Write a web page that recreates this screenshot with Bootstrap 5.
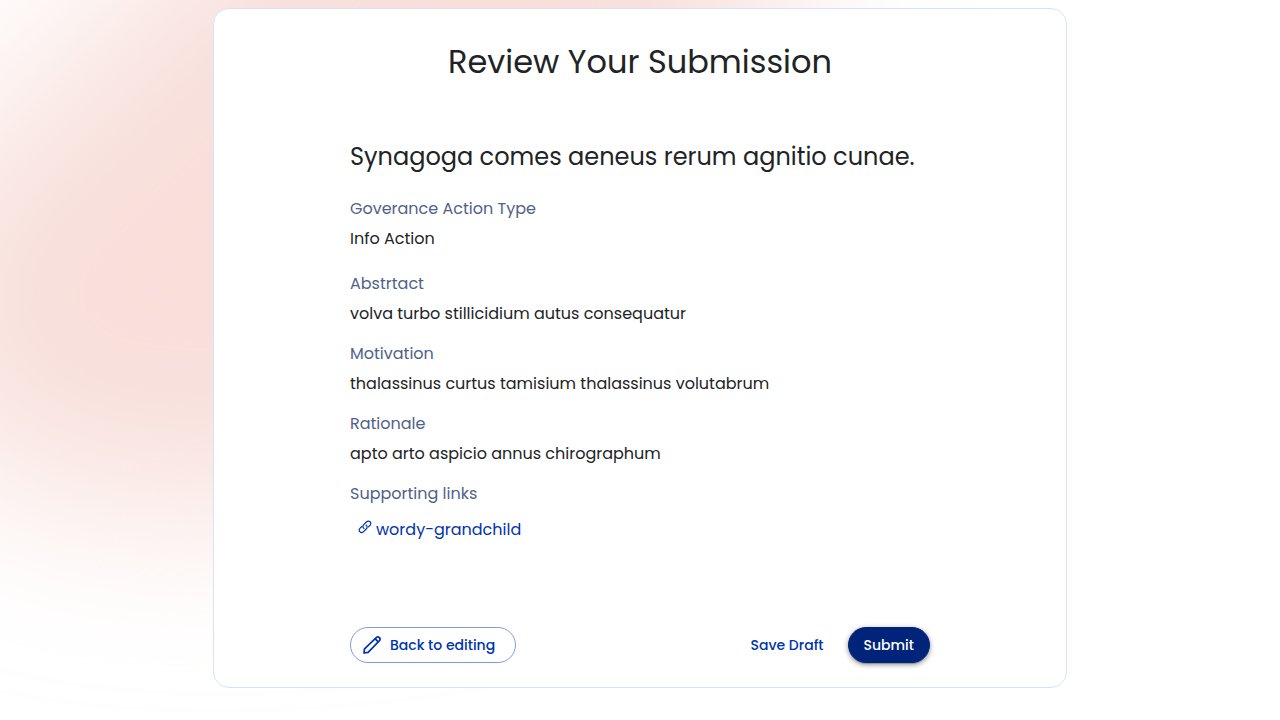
<!DOCTYPE html>
<html lang="en">
<head>
<meta charset="utf-8">
<meta name="viewport" content="width=device-width, initial-scale=1">
<title>Review Your Submission</title>
<link href="https://cdn.jsdelivr.net/npm/bootstrap@5.3.0/dist/css/bootstrap.min.css" rel="stylesheet">
<style>
  body { font-family: Poppins, Inter, "Open Sans", sans-serif; color: #212325; font-size: 16px; line-height: 24px; background: #fff; }
  .backdrop { position: fixed; inset: 0; width: 100%; height: 100%; z-index: -1; }
  .review-page { padding: 8px; min-height: 100vh; }
  .review-card { max-width: 854px; border: 1px solid #d6e2ff; border-radius: 16px; background: #fff; padding: 29px 24px 24px; }
  .review-body { max-width: 580px; }
  .review-title { font-size: 32px; line-height: 48px; font-weight: 400; margin-bottom: 53px; }
  .review-name { font-size: 24px; line-height: 36px; font-weight: 400; margin-bottom: 22px; }
  .review-list dt { font-weight: 400; color: #506288; margin-bottom: 6px; }
  .review-list dd { margin-bottom: 16px; }
  .review-list .type-value { margin-bottom: 21px; }
  .review-list .links-value { padding: 5px 8px; margin-bottom: 80px; }
  .ref-link { color: #0033ad; }
  .ref-icon { margin-top: 2px; }
  .pill { font-size: 14px; line-height: 24px; font-weight: 500; border-radius: 18px; padding: 5px 15px; }
  .pill-outline { --bs-btn-color: #0033ad; --bs-btn-border-color: #809cda; padding-left: 11px; padding-right: 20px; }
  .pill-text { --bs-btn-color: #0033ad; }
  .pill-solid { --bs-btn-color: #fff; --bs-btn-bg: #00247a; --bs-btn-border-color: #00247a; box-shadow: 0 3px 1px -2px rgba(0,0,0,.2), 0 2px 4px rgba(0,0,0,.25), 0 1px 6px rgba(0,0,0,.2); }
</style>
</head>
<body>
<svg class="backdrop" viewBox="0 0 1280 720" preserveAspectRatio="xMinYMin slice" aria-hidden="true">
  <defs><filter id="soft" filterUnits="userSpaceOnUse" x="-500" y="-700" width="2000" height="1700"><feGaussianBlur stdDeviation="85"/></filter></defs>
  <path d="M-85 200L250 -120L500 -400H830L790 0L500 480Q250 530 60 500Q-165 430 -85 200Z" fill="#f8dfda" filter="url(#soft)"/>
</svg>
<main class="review-page">
  <section class="review-card mx-auto">
    <h1 class="review-title text-center">Review Your Submission</h1>
    <div class="review-body mx-auto">
      <h2 class="review-name">Synagoga comes aeneus rerum agnitio cunae.</h2>
      <dl class="review-list mb-0">
        <dt>Goverance Action Type</dt>
        <dd class="type-value">Info Action</dd>
        <dt>Abstrtact</dt>
        <dd>volva turbo stillicidium autus consequatur</dd>
        <dt>Motivation</dt>
        <dd>thalassinus curtus tamisium thalassinus volutabrum</dd>
        <dt>Rationale</dt>
        <dd>apto arto aspicio annus chirographum</dd>
        <dt>Supporting links</dt>
        <dd class="links-value">
          <a class="ref-link d-inline-flex gap-1 text-decoration-none" href="#">
            <svg class="ref-icon" width="14" height="14" viewBox="0 0 14 14" fill="none" stroke="currentColor" stroke-width="1.2" stroke-linecap="round" aria-hidden="true"><path d="M6 8.5C4.6 7.6 4.6 5.7 5.7 4.6L8.4 2C9.5 .9 11.1 .9 12.1 1.8S13 4.4 11.9 5.5L10.4 6.9M8 5.1C9.4 6 9.4 7.9 8.3 9L5.6 11.6C4.5 12.7 2.9 12.7 1.9 11.8S1 9.2 2.1 8.1L3.6 6.7"/></svg>
            <span>wordy-grandchild</span>
          </a>
        </dd>
      </dl>
      <div class="d-flex flex-wrap justify-content-between gap-2">
        <button type="button" class="btn pill pill-outline d-inline-flex align-items-center gap-2">
          <svg width="20" height="20" viewBox="0 0 20 20" fill="none" stroke="currentColor" stroke-width="1.7" stroke-linejoin="round" aria-hidden="true"><path d="M2 18L2.5 13.8L14.5 2.4Q16 1.2 17.4 2.6T17.5 5.6L6.1 17.3Z"/><path d="M13.3 3.9L15.9 6.7"/></svg>
          Back to editing
        </button>
        <div class="d-flex gap-2">
          <button type="button" class="btn pill pill-text">Save Draft</button>
          <button type="button" class="btn pill pill-solid">Submit</button>
        </div>
      </div>
    </div>
  </section>
</main>
<script src="https://cdn.jsdelivr.net/npm/bootstrap@5.3.0/dist/js/bootstrap.bundle.min.js"></script>
</body>
</html>
